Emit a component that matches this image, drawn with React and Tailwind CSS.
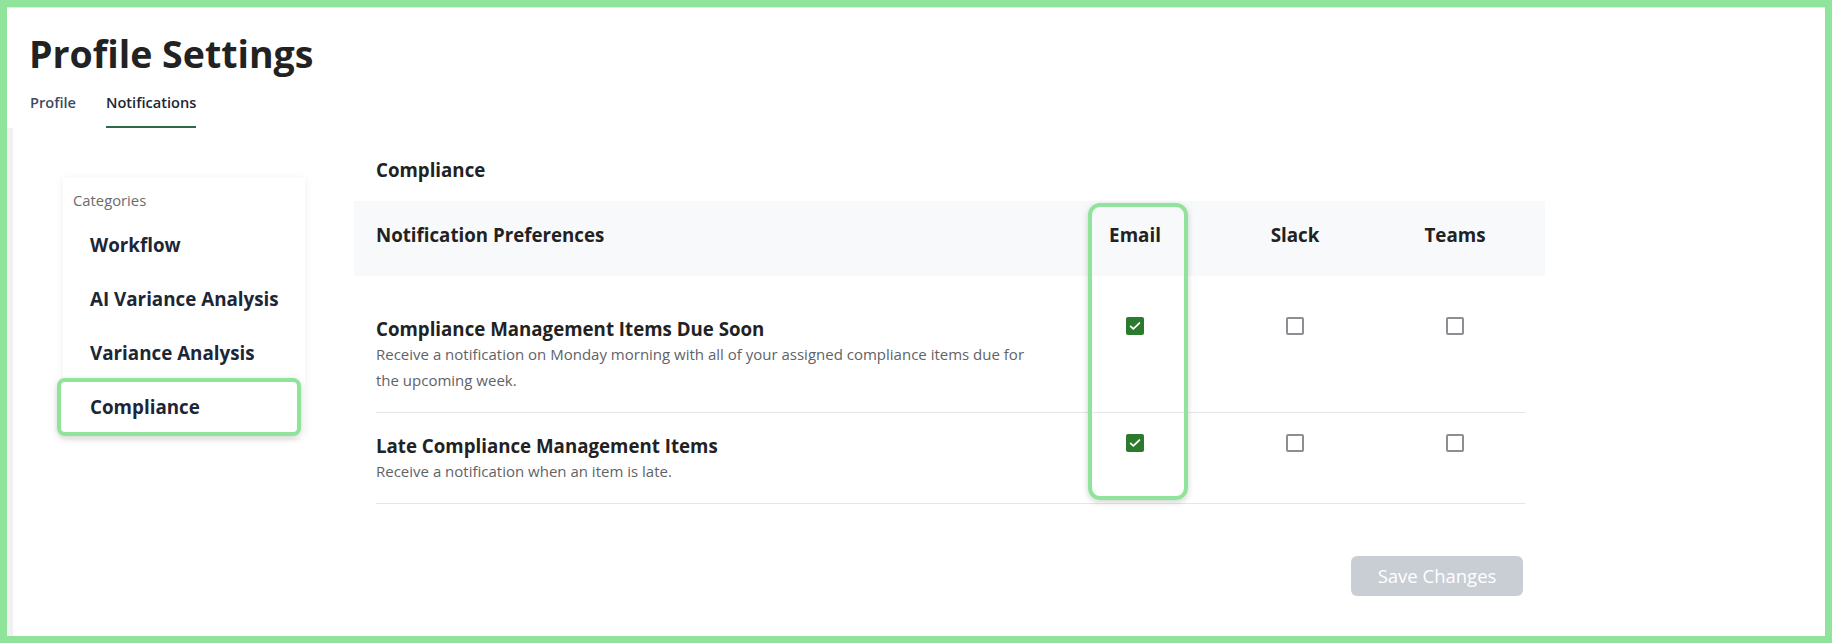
import React from "react";

const categories = ["Workflow", "AI Variance Analysis", "Variance Analysis", "Compliance"];

const preferences = [
  {
    title: "Compliance Management Items Due Soon",
    description:
      "Receive a notification on Monday morning with all of your assigned compliance items due for the upcoming week.",
    email: true,
    slack: false,
    teams: false,
  },
  {
    title: "Late Compliance Management Items",
    description: "Receive a notification when an item is late.",
    email: true,
    slack: false,
    teams: false,
  },
];

const Checkbox = ({ checked }) =>
  checked ? (
    <span className="flex h-[18px] w-[18px] items-center justify-center rounded-[2px] bg-[#2b7a2e]">
      <svg viewBox="0 0 16 16" className="h-[14px] w-[14px]" fill="none">
        <path d="M3 8.4l3.1 3L13 4.6" stroke="#fff" strokeWidth="2" strokeLinecap="round" strokeLinejoin="round" />
      </svg>
    </span>
  ) : (
    <span className="block h-[18px] w-[18px] rounded-[2px] border-2 border-[#8b8f94] bg-white" />
  );

const Sidebar = () => (
  <div className="mt-[50px] h-[260px] w-[242px] bg-white pt-3 pb-1 shadow-[0_0_8px_rgba(0,0,0,0.06)]">
    <div className="pl-[10px] text-[14.8px] leading-5 text-[#6b6b6b]">Categories</div>
    <ul className="mt-2">
      {categories.map((name) =>
        name === "Compliance" ? (
          <li
            key={name}
            className="-my-[2px] -ml-[6px] flex h-[58px] w-[244px] items-center rounded-lg border-4 border-[#8fe39a] bg-white pl-[29px] text-[18.8px] font-bold text-[#1d2636] shadow-[0_2px_6px_rgba(0,0,0,0.18)]"
          >
            {name}
          </li>
        ) : (
          <li key={name} className="flex h-[54px] items-center pl-[27px] text-[18.8px] font-bold text-[#1d2636]">
            {name}
          </li>
        )
      )}
    </ul>
  </div>
);

const PreferenceTable = () => (
  <div className="relative">
    <div className="flex h-[75px] w-[1191px] items-start bg-[#f8f9fa] pt-[21px]">
      <div className="w-[701px] pl-[22px] text-[18.7px] font-bold leading-[26px] text-[#222]">
        Notification Preferences
      </div>
      {["Email", "Slack", "Teams"].map((c) => (
        <div key={c} className="w-40 text-center text-[18.8px] font-bold leading-[26px] text-[#222]">
          {c}
        </div>
      ))}
    </div>

    <div className="ml-[22px] mt-[20px] w-[1149px]">
      {preferences.map((p) => (
        <div key={p.title} className="flex items-start border-b border-[#e3e6ea] pt-[21px] pb-[19px]">
          <div className="w-[679px] shrink-0">
            <div className="text-[18.7px] font-bold leading-6 text-[#222]">{p.title}</div>
            <div className="max-w-[665px] text-[15px] leading-[26px] text-[#5f6368]">{p.description}</div>
          </div>
          {[p.email, p.slack, p.teams].map((on, i) => (
            <div key={i} className="flex w-40 shrink-0 justify-center">
              <Checkbox checked={on} />
            </div>
          ))}
        </div>
      ))}
    </div>

    {/* email column highlight */}
    <div className="pointer-events-none absolute left-[734px] top-[2px] h-[297px] w-[100px] rounded-xl border-4 border-[#8fe39a] shadow-[0_2px_6px_rgba(0,0,0,0.18)]" />

    <div className="ml-[22px] mt-[52px] flex w-[1149px] justify-end pr-[2px]">
      <button className="h-10 w-[172px] rounded-md bg-[#c9ced4] text-[18.5px] text-white">Save Changes</button>
    </div>
  </div>
);

export default function App() {
  return (
    <div className="box-border flex h-[643px] w-[1832px] flex-col border-[7px] border-[#8fe39a] bg-white font-['Open_Sans',sans-serif]">
      <div className="border-t border-[#e6e6e6] pl-[22px] pt-[21px]">
        <h1 className="text-[37.5px] font-bold leading-[50px] text-[#222]">Profile Settings</h1>
        <nav className="mt-[13px] flex gap-[30px] pl-[1px] text-[14.6px] font-semibold leading-5">
          <span className="pb-[16px] text-[#3c4a66]">Profile</span>
          <span className="border-b-2 border-[#2d6a4a] pb-[14px] text-[#1d2636]">Notifications</span>
        </nav>
      </div>

      <div className="flex flex-1">
        <div className="w-[6px] bg-[#f1f1f1]" />
        <div className="flex items-start gap-[49px] pl-[50px]">
          <Sidebar />
          <div className="mt-[29px]">
            <h2 className="pl-[22px] text-[18.7px] font-bold leading-[26px] text-[#222]">Compliance</h2>
            <div className="mt-[18px]">
              <PreferenceTable />
            </div>
          </div>
        </div>
      </div>
    </div>
  );
}
